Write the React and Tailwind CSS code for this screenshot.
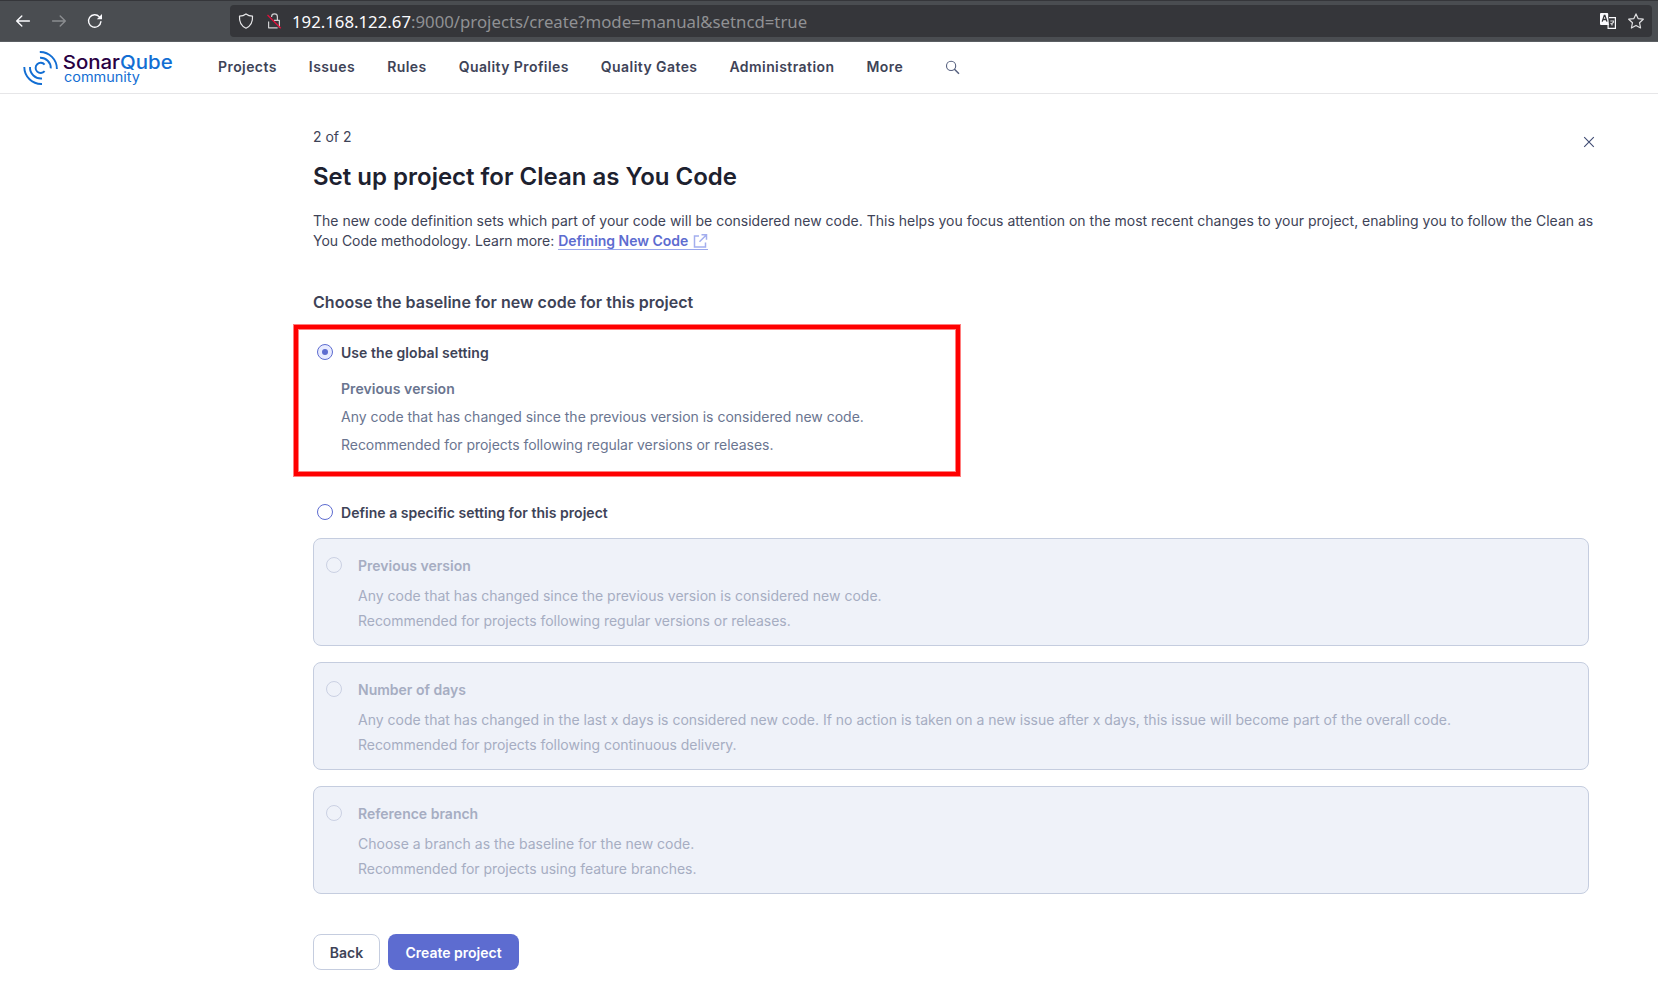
const NAV = ['Projects', 'Issues', 'Rules', 'Quality Profiles', 'Quality Gates', 'Administration', 'More'];

const CARDS = [
  {
    title: 'Previous version',
    lines: [
      'Any code that has changed since the previous version is considered new code.',
      'Recommended for projects following regular versions or releases.',
    ],
  },
  {
    title: 'Number of days',
    lines: [
      'Any code that has changed in the last x days is considered new code. If no action is taken on a new issue after x days, this issue will become part of the overall code.',
      'Recommended for projects following continuous delivery.',
    ],
  },
  {
    title: 'Reference branch',
    lines: [
      'Choose a branch as the baseline for the new code.',
      'Recommended for projects using feature branches.',
    ],
  },
];

function BrowserBar() {
  return (
    <div className="flex h-[42px] items-center border-t border-b border-t-[#35363a] border-b-[#5b5f63] bg-[#4a4d51] pr-1.5">
      <div className="flex w-[230px] items-center gap-5 pl-[15px] text-[#fbfbfe]">
        <svg className="size-4" viewBox="0 0 16 16" fill="none" stroke="currentColor" strokeWidth="1.4" strokeLinecap="round" strokeLinejoin="round">
          <path d="M14.4 8H1.8M6.8 2.9L1.7 8l5.1 5.1" />
        </svg>
        <svg className="size-4 text-[#8b8d90]" viewBox="0 0 16 16" fill="none" stroke="currentColor" strokeWidth="1.4" strokeLinecap="round" strokeLinejoin="round">
          <path d="M1.6 8h12.6M9.2 2.9L14.3 8l-5.1 5.1" />
        </svg>
        <svg className="size-4" viewBox="0 0 16 16" fill="none" stroke="currentColor" strokeWidth="1.4" strokeLinecap="round">
          <path d="M13.9 8.6A6.2 6.2 0 1 1 12.4 3.9" />
          <path d="M15 1v5.2H9.8z" fill="currentColor" stroke="none" />
        </svg>
      </div>
      <div className="flex h-8 flex-1 items-center rounded bg-[#35363a] pr-2 pl-2">
        <svg className="size-4" viewBox="0 0 16 16" fill="none" stroke="#e8e8ea" strokeWidth="1.2" strokeLinejoin="round">
          <path d="M8 .9c2 1.500 4.200 2.100 6.500 2.200C14.900 8.900 12.400 13.200 8 15.200 3.600 13.200 1.100 8.900 1.500 3.100 3.800 3 6 2.400 8 .9z" />
        </svg>
        <svg className="ml-3 size-4" viewBox="0 0 16 16" fill="none">
          <path d="M5.600 4V3.800a2.900 2.900 0 0 1 5.800 0V7.200M8 7.400h5.400v7.400M2.600 8.500v6.300h9" stroke="#d0d0d2" strokeWidth="1.2" strokeLinejoin="round" />
          <path d="M1.500 2L14.800 15.300" stroke="#e0103c" strokeWidth="1.300" />
        </svg>
        <div className="ml-[10px] flex-1 pt-px text-[16.78px] leading-6 text-[#909194] [font-family:'Noto_Sans',sans-serif]">
          <span className="text-[#fbfbfe]">192.168.122.67</span>:9000/projects/create?mode=manual&amp;setncd=true
        </div>
        <svg className="size-4" viewBox="0 0 16 16">
          <path d="M1 0h6.200a1 1 0 0 1 1 1v3.600L9 12H1a1 1 0 0 1-1-1V1a1 1 0 0 1 1-1z" fill="#fbfbfe" />
          <path d="M2.200 8.600L4.300 2.400h.6L7 8.600M2.900 6.500h3.400" fill="none" stroke="#35363a" strokeWidth="1.300" />
          <path d="M9 4.600h6.400v10.800H8.100V12" fill="none" stroke="#fbfbfe" strokeWidth="1.200" />
          <path d="M10.300 8h3.200v1.200L12 10.600v1.800M10.500 10.300l1 .6" fill="none" stroke="#d8d8da" strokeWidth="1.200" />
        </svg>
        <svg className="ml-3 size-4" viewBox="0 0 16 16" fill="none" stroke="#e0e0e2" strokeWidth="1.200" strokeLinejoin="round">
          <path d="M8 .9l2.100 4.700 5.200.6-3.800 3.500 1.100 5.300L8 12.400l-4.600 2.600 1.100-5.300L.7 6.200l5.200-.6z" />
        </svg>
      </div>
    </div>
  );
}

function Logo() {
  return (
    <svg className="h-[38px] w-[154px]" viewBox="22 49 154 38" fill="none">
      <g stroke="#126ed3" strokeWidth="1.900">
        <path d="M44.600 64.600A5.100 5.100 0 1 0 44.600 71.200" />
        <path d="M40 57.800A10.300 10.300 0 0 1 50.800 68.400" />
        <path d="M39.800 52A16.800 16.800 0 0 1 56.900 69" />
        <path d="M30 67A11 11 0 0 0 42 78.500" />
        <path d="M24.300 67A17 17 0 0 0 42 84" />
      </g>
      <text x="62.700" y="68.800" fontSize="19" fontWeight="500" textLength="110" lengthAdjust="spacingAndGlyphs" fontFamily="Inter, sans-serif">
        <tspan fill="#290042">Sonar</tspan>
        <tspan fill="#126ed3">Qube</tspan>
      </text>
      <text x="64" y="82" fontSize="13" textLength="76" lengthAdjust="spacingAndGlyphs" fill="#126ed3" fontFamily="Inter, sans-serif">community</text>
    </svg>
  );
}

function Radio({ state }) {
  if (state === 'checked')
    return (
      <span className="flex size-4 shrink-0 items-center justify-center rounded-full border border-[#5d6cd0] bg-[#e8ebff]">
        <span className="size-1.5 rounded-full bg-[#5d6cd0]" />
      </span>
    );
  if (state === 'disabled') return <span className="mt-px size-4 shrink-0 rounded-full border border-[#cbd1e3]" />;
  return <span className="mt-px size-4 shrink-0 rounded-full border border-[#5d6cd0] bg-white" />;
}

export default function App() {
  return (
    <div className="h-[985px] overflow-hidden bg-white text-sm text-[#3e4357] [font-family:Inter,sans-serif]">
      <BrowserBar />
      <header className="flex h-[52px] items-center border-b border-[#e6e6e8] pl-[22px]">
        <Logo />
        <nav className="ml-[42px] flex items-center gap-8 pb-px font-semibold tracking-[0.425px]">
          {NAV.map((n) => (
            <span key={n}>{n}</span>
          ))}
        </nav>
        <svg className="ml-[42px] size-4" viewBox="0 0 16 16" fill="none" stroke="#56607f" strokeWidth="1.100">
          <circle cx="6.100" cy="5.900" r="4.600" />
          <path d="M9.200 9L14 13.800" strokeWidth="1.500" />
        </svg>
      </header>

      <main className="w-[1596px] pl-[313px]">
        <div className="flex items-start justify-between pt-[33px]">
          <span className="leading-5">2 of 2</span>
          <svg className="mt-[7px] size-4" viewBox="0 0 16 16" fill="none" stroke="#3e4a72" strokeWidth="1.100">
            <path d="M4.200 3.200l9.600 9.600M13.800 3.200l-9.600 9.600" />
          </svg>
        </div>
        <h1 className="mt-[11px] text-2xl leading-8 font-semibold text-[#1d212f]">Set up project for Clean as You Code</h1>
        <p className="mt-[18px] leading-5">
          The new code definition sets which part of your code will be considered new code. This helps you focus attention on the most recent changes to your project, enabling you to follow the Clean as <span className="tracking-[-0.03px]">You Code methodology. Learn more: </span>
          <a className="border-b border-[#9aa7ec] font-semibold tracking-[-0.03px] text-[#5d6cd0]">
            Defining New Code
            <svg className="ml-1 inline size-4 align-[-3px]" viewBox="0 0 16 16" fill="none" stroke="#a3aeee" strokeWidth="1.500">
              <path d="M7 3H2.500v11h11V9.500M9.500 1.800h5v5M14.300 2L7.500 8.800" />
            </svg>
          </a>
        </p>
        <h2 className="mt-[39px] text-base leading-6 font-semibold tracking-[0.02px]">Choose the baseline for new code for this project</h2>

        <section className="mt-[11px] ml-[-19px] h-[151px] w-[666px] border-4 border-[#ff0000] px-[19px] pt-[14px] shadow-[0_0_0_1px_rgba(255,0,0,0.5),inset_0_0_0_1px_rgba(255,0,0,0.5)]">
          <div className="flex items-start gap-2">
            <span className="pt-px">
              <Radio state="checked" />
            </span>
            <span className="leading-5 font-semibold tracking-[0.05px]">Use the global setting</span>
          </div>
          <div className="mt-4 flex flex-col gap-2 pl-6 leading-5 text-[#6a7590]">
            <span className="font-semibold tracking-[0.07px]">Previous version</span>
            <span className="tracking-[-0.01px]">Any code that has changed since the previous version is considered new code.</span>
            <span className="tracking-[-0.035px]">Recommended for projects following regular versions or releases.</span>
          </div>
        </section>

        <div className="mt-[27px] flex items-start gap-2 pl-1">
          <Radio />
          <span className="leading-5 font-semibold tracking-[0.03px]">Define a specific setting for this project</span>
        </div>

        <div className="mt-[15px] flex w-[1276px] flex-col gap-4">
          {CARDS.map((c) => (
            <div key={c.title} className="flex h-[108px] rounded-lg border border-[#c5cddf] bg-[#eff2f9] pt-[17px] pl-3 text-[#a6adc2]">
              <Radio state="disabled" />
              <div className="ml-4 flex flex-col">
                <span className="leading-5 font-semibold">{c.title}</span>
                <div className="mt-[7px] flex flex-col leading-[25px]">
                  {c.lines.map((l, i) => (
                    <span key={l} className={i === 1 ? 'tracking-[-0.03px]' : ''}>
                      {l}
                    </span>
                  ))}
                </div>
              </div>
            </div>
          ))}
        </div>

        <div className="mt-10 flex gap-2 font-semibold">
          <button className="h-9 w-[67px] rounded-lg border border-[#c5cddf] pt-px">Back</button>
          <button className="h-9 w-[131px] rounded-lg bg-[#5d6cd0] pt-px text-white">Create project</button>
        </div>
      </main>
    </div>
  );
}
